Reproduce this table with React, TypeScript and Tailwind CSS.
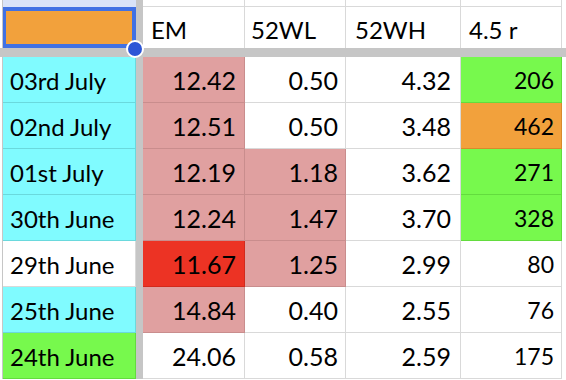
import React from "react";

const W = "bg-white border-[#d9d9d9]";
const CY = "bg-[#80fbff] border-[#6ad9dd]";
const PK = "bg-[#e0a0a0] border-[#c98d8d]";
const RD = "bg-[#ec3324] border-[#d22a1c]";
const GR = "bg-[#77f94d] border-[#63dc3e]";
const OR = "bg-[#f2a13c] border-[#d98a2c]";

const rows: { d: string; dc: string; cells: [string, string][] }[] = [
  { d: "03rd July", dc: CY, cells: [["12.42", PK], ["0.50", W], ["4.32", W], ["206", GR]] },
  { d: "02nd July", dc: CY, cells: [["12.51", PK], ["0.50", W], ["3.48", W], ["462", OR]] },
  { d: "01st July", dc: CY, cells: [["12.19", PK], ["1.18", PK], ["3.62", W], ["271", GR]] },
  { d: "30th June", dc: CY, cells: [["12.24", PK], ["1.47", PK], ["3.70", W], ["328", GR]] },
  { d: "29th June", dc: W, cells: [["11.67", RD], ["1.25", PK], ["2.99", W], ["80", W]] },
  { d: "25th June", dc: CY, cells: [["14.84", PK], ["0.40", W], ["2.55", W], ["76", W]] },
  { d: "24th June", dc: GR, cells: [["24.06", W], ["0.58", W], ["2.59", W], ["175", W]] },
];

const widths = ["w-[102px]", "w-[101px]", "w-[115px]", "w-[101px]"];
const pads = ["pr-[8px]", "pr-[7px]", "pr-[9px]", "pr-[7px]"];

export default function App() {
  return (
    <div
      className="relative w-[566px] h-[380px] overflow-hidden bg-white text-black"
      style={{ fontFamily: "Lato, 'Open Sans', sans-serif" }}
    >
      {/* top partial row */}
      <div className="flex h-[7px]">
        <div className="w-[3px] border-r border-[#c6c6c6] bg-white" />
        <div className="w-[133px] bg-[#d9e3f8]" />
        <div className="w-[7px] bg-[#c6c6c6]" />
        {widths.map((w, i) => (
          <div key={i} className={`${w} border-r border-b border-[#d9d9d9] bg-white`} />
        ))}
        <div className="flex-1 bg-white" />
      </div>
      {/* header row */}
      <div className="flex h-[41px]">
        <div className="w-[3px] border-r border-[#c6c6c6] bg-white" />
        <div className="w-[133px] bg-[#f2a13c] border-[4px] border-[#4171e3] border-l-[3px]" />
        <div className="w-[7px] bg-[#c6c6c6]" />
        {["EM", "52WL", "52WH", "4.5 r"].map((h, i) => (
          <div
            key={h}
            className={`${widths[i]} border-r border-[#d9d9d9] bg-white flex items-center pt-[4px] ${
              i === 1 ? "pl-[6px]" : i === 2 ? "pl-[9px]" : "pl-[8px]"
            } text-[24px] leading-none`}
          >
            {h}
          </div>
        ))}
        <div className="flex-1 bg-white" />
      </div>
      {/* frozen separator */}
      <div className="h-[9px] bg-[#c6c6c6]" />
      {/* data rows */}
      {rows.map((r) => (
        <div key={r.d} className="flex h-[46px]">
          <div className="w-[3px] border-r border-[#c6c6c6] bg-white" />
          <div
            className={`w-[133px] ${r.dc} border-r border-b flex items-center pl-[7px] pt-[2px] text-[24px] leading-none`}
          >
            {r.d}
          </div>
          <div className="w-[7px] bg-[#c6c6c6]" />
          {r.cells.map(([t, c], i) => (
            <div
              key={i}
              className={`${widths[i]} ${c} border-r border-b flex items-center justify-end pt-[1px] ${pads[i]} ${
                i === 3 ? "text-[23px]" : "text-[25px]"
              } leading-none`}
            >
              {t}
            </div>
          ))}
          <div className="flex-1 bg-white" />
        </div>
      ))}
      {/* fill handle */}
      <div className="absolute left-[126px] top-[40px] w-[18px] h-[18px] rounded-full bg-[#2d56d6] border-2 border-white" />
    </div>
  );
}
